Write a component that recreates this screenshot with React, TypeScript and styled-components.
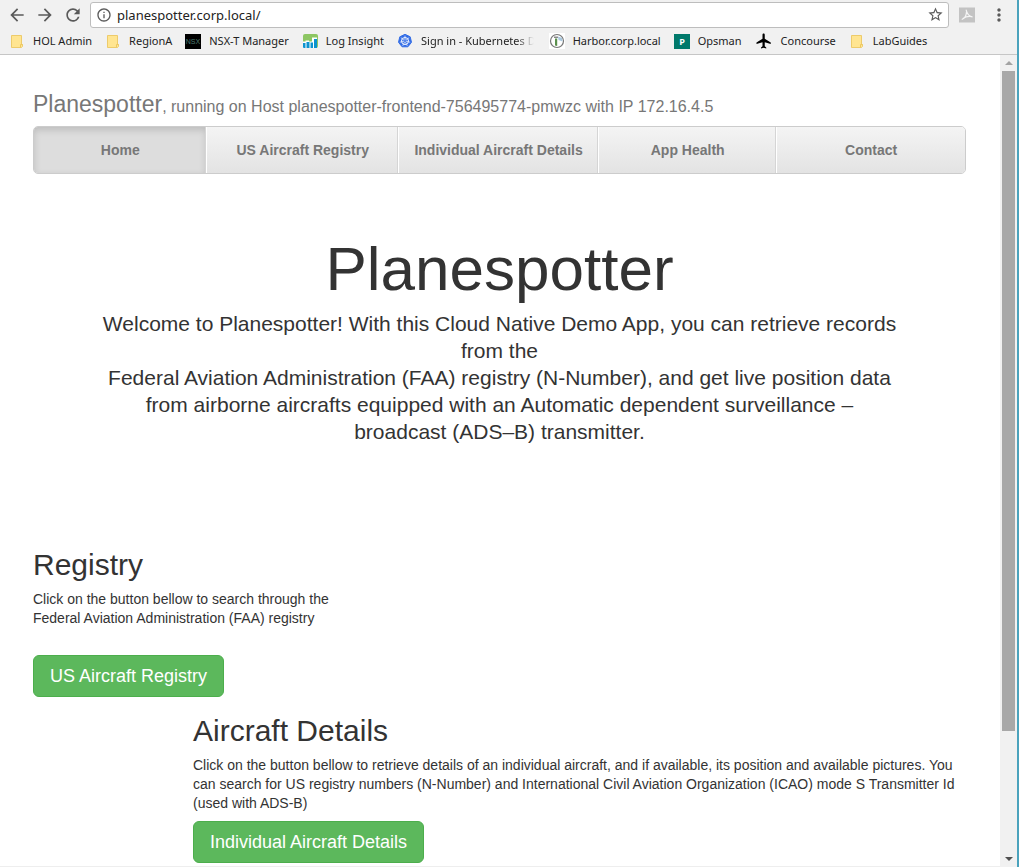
import React from 'react';
import styled, { createGlobalStyle, css } from 'styled-components';
import {
  MdArrowBack,
  MdArrowForward,
  MdFlight,
  MdInfoOutline,
  MdMoreVert,
  MdRefresh,
  MdStarBorder,
} from 'react-icons/md';

const GlobalStyle = createGlobalStyle`
  * { box-sizing: border-box; }
  body {
    margin: 0;
    background: #fff;
    color: #333;
    font-family: "Liberation Sans", Arial, sans-serif;
    font-size: 14px;
    line-height: 19px;
  }
  h1, h2, h3, p { margin: 0; font-weight: 400; }
`;

const uiFont = css`
  font-family: "Noto Sans", "Open Sans", sans-serif;
`;

/* Browser frame */

const Browser = styled.div`
  display: flex;
  flex-direction: column;
  min-height: 100vh;
  border-right: 2px solid #4ba3bd;
`;

const Chrome = styled.header`
  ${uiFont}
  background: #f1f1f1;
  border-bottom: 1px solid #c6c6c6;
`;

const Toolbar = styled.div`
  display: flex;
  align-items: center;
  padding: 1px 8px 0 7px;
  height: 28px;
`;

const IconButton = styled.button<{ $size?: number }>`
  display: flex;
  align-items: center;
  justify-content: center;
  flex: none;
  width: ${(p) => p.$size ?? 20}px;
  height: 20px;
  padding: 0;
  border: 0;
  background: none;
  color: #5a5a5a;
`;

const NavButtons = styled.div`
  display: flex;
  gap: 8px;
  margin-right: 7px;
`;

const AddressBar = styled.div`
  display: flex;
  flex: 1;
  align-items: center;
  height: 26px;
  padding: 0 4px 0 5px;
  background: #fff;
  border: 1px solid #bdbdbd;
  border-radius: 3px;
`;

const AddressInput = styled.input`
  ${uiFont}
  flex: 1;
  min-width: 0;
  margin-left: 5px;
  padding: 0;
  border: 0;
  outline: 0;
  background: none;
  color: #222;
  font-size: 13px;
`;

const Extensions = styled.div`
  display: flex;
  align-items: center;
  gap: 12px;
  margin-left: 8px;
`;

const Bookmarks = styled.nav`
  display: flex;
  align-items: center;
  gap: 13px;
  height: 26px;
  padding: 0 9px;
  overflow: hidden;
`;

const Bookmark = styled.a<{ $fade?: boolean }>`
  display: flex;
  flex: none;
  align-items: center;
  gap: 8px;
  color: #222;
  font-size: 11px;
  line-height: 16px;
  text-decoration: none;
  white-space: nowrap;

  svg { flex: none; }

  ${(p) =>
    p.$fade &&
    css`
      mask-image: linear-gradient(to left, transparent 2px, #000 20px);
    `}
`;

/* Page area */

const Viewport = styled.div`
  display: flex;
  flex: 1;
`;

const Page = styled.main`
  flex: 1;
  min-width: 0;
  padding: 36px 34px 3px 33px;
  border-bottom: 1px solid #eee;
`;

const Scrollbar = styled.div`
  display: flex;
  flex: none;
  flex-direction: column;
  width: 17px;
  background: #f1f1f1;
`;

const ScrollArrow = styled.button<{ $color: string }>`
  display: flex;
  align-items: center;
  justify-content: center;
  height: 16px;
  padding: 0;
  border: 0;
  background: none;
  color: ${(p) => p.$color};
`;

const Track = styled.div`
  display: grid;
  flex: 1;
  grid-template-rows: 11fr 2fr;
  padding: 0 2px;
`;

const Thumb = styled.div`
  background: #a8a8a8;
`;

const Masthead = styled.h3`
  color: #777;
  font-size: 23px;
  line-height: 26px;

  small {
    font-size: 16px;
    line-height: 16px;
  }
`;

const Tabs = styled.nav`
  display: flex;
  margin-top: 9px;
  overflow: hidden;
  border: 1px solid #ccc;
  border-radius: 5px;
`;

const Tab = styled.a<{ $grow: number; $active?: boolean }>`
  flex: ${(p) => p.$grow} 1 0;
  padding: 14px 4px 13px;
  background: linear-gradient(#f4f4f4, #e3e3e3);
  border-left: 1px solid #fff;
  color: #777;
  font-weight: 700;
  text-align: center;
  text-decoration: none;
  white-space: nowrap;

  & + & { box-shadow: -1px 0 0 #d5d5d5; }

  ${(p) =>
    p.$active &&
    css`
      background: #ddd;
      border-left: 0;
      box-shadow: inset 0 3px 7px rgba(0, 0, 0, 0.15);
    `}
`;

const Hero = styled.section`
  padding: 62px 56px 0;
  text-align: center;
`;

const HeroTitle = styled.h1`
  font-size: 62px;
  line-height: 66px;
`;

const Lead = styled.p`
  margin-top: 8px;
  font-size: 21px;
  line-height: 27px;
`;

const Section = styled.section<{ $top: number; $indent?: boolean }>`
  margin-top: ${(p) => p.$top}px;
  margin-left: ${(p) => (p.$indent ? 160 : 0)}px;
`;

const SectionTitle = styled.h2`
  font-size: 30px;
  line-height: 32px;
`;

const SectionText = styled.p<{ $narrow?: boolean }>`
  margin-top: 9px;
  max-width: ${(p) => (p.$narrow ? '311px' : 'none')};
`;

const ActionButton = styled.button<{ $top: number }>`
  display: block;
  margin-top: ${(p) => p.$top}px;
  padding: 10px 16px;
  background: #5cb85c;
  border: 1px solid #4cae4c;
  border-radius: 6px;
  color: #fff;
  font-family: inherit;
  font-size: 18px;
  line-height: 20px;
`;

/* Bookmark icons */

const Icon = ({ children }: { children: React.ReactNode }) => (
  <svg width="16" height="16" viewBox="0 0 16 16" aria-hidden="true">
    {children}
  </svg>
);

const FolderIcon = () => (
  <Icon>
    <path d="M2.500 2.500h10v9h1v2l-1 1h-10z" fill="#ffe591" stroke="#edcb6b" />
    <path d="M11.500 14v-2.500h2" fill="none" stroke="#edc860" />
  </Icon>
);

const NsxIcon = () => (
  <Icon>
    <rect y="1" width="16" height="15" fill="#000" />
    <text x="8" y="11" textAnchor="middle" fontSize="7" fontFamily="Liberation Sans, sans-serif" fill="#4d7a72">
      NSX
    </text>
  </Icon>
);

const LogInsightIcon = () => (
  <Icon>
    <rect x="1" y="1" width="15" height="14" rx="2" fill="#8dc663" />
    <path d="M1 8.500h2.500V7.500H7V8.500H10V4.500H15V15H1z" fill="#fff" />
    <path d="M1 10h2.500v5H2a1 1 0 0 1-1-1zM4.500 9h3v6h-3zM8.500 9.500h2.500v5.500H8.500zM12 6h3v9h-3z" fill="#0c93cf" />
  </Icon>
);

const KubernetesIcon = () => (
  <Icon>
    <path d="M8 1.300l5.200 2.500 1.300 5.500-3.600 4.500H5.100L1.500 9.300l1.300-5.500z" fill="#326ce5" stroke="#326ce5" strokeLinejoin="round" />
    <circle cx="8" cy="8" r="3.500" fill="none" stroke="#fff" strokeWidth="1" />
    <path d="M8 8V2.600M8 8l4.200-3.400M8 8l5.200 1.200M8 8l2.300 4.900M8 8l-2.300 4.900M8 8L2.800 9.200M8 8L3.800 4.600" stroke="#dfe8fb" strokeWidth=".8" />
    <circle cx="8" cy="8" r="1" fill="#326ce5" />
  </Icon>
);

const HarborIcon = () => (
  <Icon>
    <rect width="16" height="16" fill="#fff" />
    <circle cx="8" cy="8" r="6.500" fill="#fff" stroke="#777" strokeWidth="1.200" />
    <path d="M9 3.500l4 1.500.5 3.500-4-1.500z" fill="#a9c8df" />
    <path d="M6 5.500h2.200V13L6 12.500z" fill="#5a8f4c" />
    <path d="M5 3.500h4v1.500H5z" fill="#888" />
  </Icon>
);

const OpsmanIcon = () => (
  <Icon>
    <rect y="1" width="16" height="15" fill="#00796b" />
    <text x="8" y="12" textAnchor="middle" fontSize="9" fontWeight="700" fontFamily="Open Sans, sans-serif" fill="#fff">
      P
    </text>
  </Icon>
);

const PdfIcon = () => (
  <Icon>
    <rect width="16" height="15" y=".5" fill="#c3c3c3" />
    <path
      d="M7.200 3.200C8 6.500 10 9.300 13 9.800M7.600 4.500C7.300 8 5.500 11.500 3.200 12.300M4 11.500C6.500 9.600 9.500 8.800 13 9.600"
      fill="none"
      stroke="#f5f5f5"
      strokeWidth="1.200"
      strokeLinecap="round"
    />
  </Icon>
);

const bookmarks = [
  { label: 'HOL Admin', icon: <FolderIcon /> },
  { label: 'RegionA', icon: <FolderIcon /> },
  { label: 'NSX-T Manager', icon: <NsxIcon /> },
  { label: 'Log Insight', icon: <LogInsightIcon /> },
  { label: 'Sign in - Kubernetes D', icon: <KubernetesIcon />, fade: true },
  { label: 'Harbor.corp.local', icon: <HarborIcon /> },
  { label: 'Opsman', icon: <OpsmanIcon /> },
  { label: 'Concourse', icon: <MdFlight size={18} color="#000" /> },
  { label: 'LabGuides', icon: <FolderIcon /> },
];

const tabs = [
  { label: 'Home', grow: 173, active: true },
  { label: 'US Aircraft Registry', grow: 192 },
  { label: 'Individual Aircraft Details', grow: 201 },
  { label: 'App Health', grow: 178 },
  { label: 'Contact', grow: 189 },
];

export default function App() {
  return (
    <Browser>
      <GlobalStyle />
      <Chrome>
        <Toolbar>
          <NavButtons>
            <IconButton aria-label="Back"><MdArrowBack size={20} /></IconButton>
            <IconButton aria-label="Forward"><MdArrowForward size={20} /></IconButton>
            <IconButton aria-label="Reload"><MdRefresh size={20} /></IconButton>
          </NavButtons>
          <AddressBar>
            <IconButton $size={16} aria-label="Site information"><MdInfoOutline size={16} /></IconButton>
            <AddressInput aria-label="Address" defaultValue="planespotter.corp.local/" />
            <IconButton $size={18} aria-label="Bookmark this page"><MdStarBorder size={17} /></IconButton>
          </AddressBar>
          <Extensions>
            <IconButton aria-label="PDF"><PdfIcon /></IconButton>
            <IconButton aria-label="Menu"><MdMoreVert size={20} /></IconButton>
          </Extensions>
        </Toolbar>
        <Bookmarks aria-label="Bookmarks">
          {bookmarks.map((b) => (
            <Bookmark key={b.label} href="#" $fade={b.fade}>
              {b.icon}
              {b.label}
            </Bookmark>
          ))}
        </Bookmarks>
      </Chrome>
      <Viewport>
        <Page>
          <Masthead>
            Planespotter<small>, running on Host planespotter-frontend-756495774-pmwzc with IP 172.16.4.5</small>
          </Masthead>
          <Tabs aria-label="Main">
            {tabs.map((t) => (
              <Tab key={t.label} href="#" $grow={t.grow} $active={t.active}>
                {t.label}
              </Tab>
            ))}
          </Tabs>
          <Hero>
            <HeroTitle>Planespotter</HeroTitle>
            <Lead>
              Welcome to Planespotter! With this Cloud Native Demo App, you can retrieve records from the
              <br />
              Federal Aviation Administration (FAA) registry (N-Number), and get live position data
              <br />
              from airborne aircrafts equipped with an Automatic dependent surveillance –
              <br />
              broadcast (ADS–B) transmitter.
            </Lead>
          </Hero>
          <Section $top={104}>
            <SectionTitle>Registry</SectionTitle>
            <SectionText $narrow>
              Click on the button bellow to search through the Federal Aviation Administration (FAA) registry
            </SectionText>
            <ActionButton $top={27}>US Aircraft Registry</ActionButton>
          </Section>
          <Section $top={18} $indent>
            <SectionTitle>Aircraft Details</SectionTitle>
            <SectionText>
              Click on the button bellow to retrieve details of an individual aircraft, and if available, its position
              and available pictures. You can search for US registry numbers (N-Number) and International Civil
              Aviation Organization (ICAO) mode S Transmitter Id (used with ADS-B)
            </SectionText>
            <ActionButton $top={8}>Individual Aircraft Details</ActionButton>
          </Section>
        </Page>
        <Scrollbar>
          <ScrollArrow aria-label="Scroll up" $color="#a3a3a3">
            <svg width="8" height="4" viewBox="0 0 8 4"><path d="M0 4l4-4 4 4z" fill="currentColor" /></svg>
          </ScrollArrow>
          <Track><Thumb /></Track>
          <ScrollArrow aria-label="Scroll down" $color="#505050">
            <svg width="8" height="4" viewBox="0 0 8 4"><path d="M0 0l4 4 4-4z" fill="currentColor" /></svg>
          </ScrollArrow>
        </Scrollbar>
      </Viewport>
    </Browser>
  );
}
